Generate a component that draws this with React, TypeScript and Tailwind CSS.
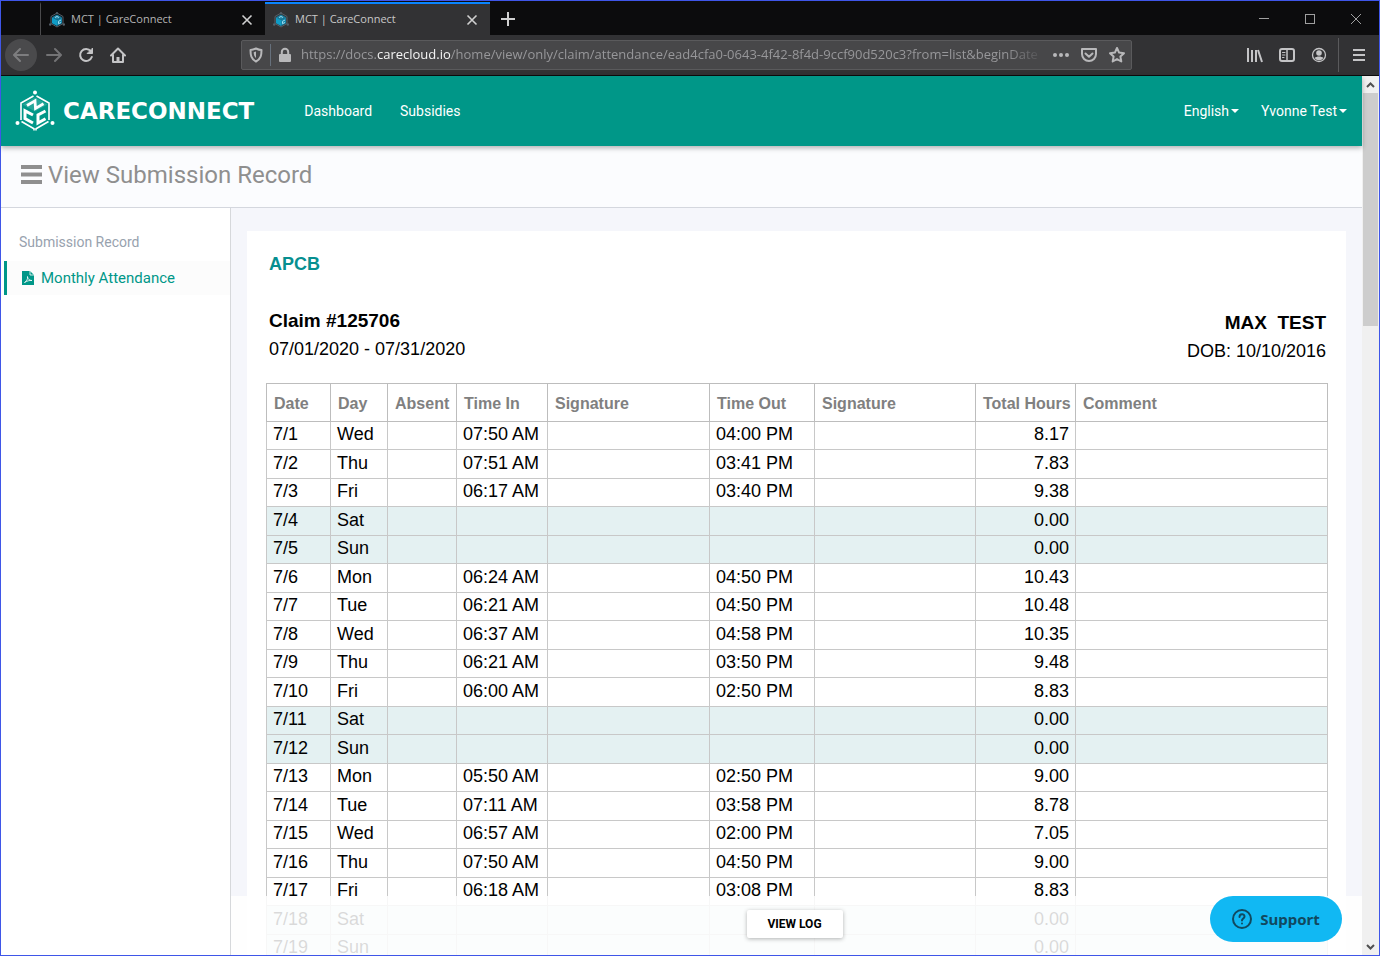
import type { ReactNode } from "react";

type Row = {
  date: string;
  day: string;
  timeIn?: string;
  timeOut?: string;
  hours: string;
};

const rows: Row[] = [
  { date: "7/1", day: "Wed", timeIn: "07:50 AM", timeOut: "04:00 PM", hours: "8.17" },
  { date: "7/2", day: "Thu", timeIn: "07:51 AM", timeOut: "03:41 PM", hours: "7.83" },
  { date: "7/3", day: "Fri", timeIn: "06:17 AM", timeOut: "03:40 PM", hours: "9.38" },
  { date: "7/4", day: "Sat", hours: "0.00" },
  { date: "7/5", day: "Sun", hours: "0.00" },
  { date: "7/6", day: "Mon", timeIn: "06:24 AM", timeOut: "04:50 PM", hours: "10.43" },
  { date: "7/7", day: "Tue", timeIn: "06:21 AM", timeOut: "04:50 PM", hours: "10.48" },
  { date: "7/8", day: "Wed", timeIn: "06:37 AM", timeOut: "04:58 PM", hours: "10.35" },
  { date: "7/9", day: "Thu", timeIn: "06:21 AM", timeOut: "03:50 PM", hours: "9.48" },
  { date: "7/10", day: "Fri", timeIn: "06:00 AM", timeOut: "02:50 PM", hours: "8.83" },
  { date: "7/11", day: "Sat", hours: "0.00" },
  { date: "7/12", day: "Sun", hours: "0.00" },
  { date: "7/13", day: "Mon", timeIn: "05:50 AM", timeOut: "02:50 PM", hours: "9.00" },
  { date: "7/14", day: "Tue", timeIn: "07:11 AM", timeOut: "03:58 PM", hours: "8.78" },
  { date: "7/15", day: "Wed", timeIn: "06:57 AM", timeOut: "02:00 PM", hours: "7.05" },
  { date: "7/16", day: "Thu", timeIn: "07:50 AM", timeOut: "04:50 PM", hours: "9.00" },
  { date: "7/17", day: "Fri", timeIn: "06:18 AM", timeOut: "03:08 PM", hours: "8.83" },
  { date: "7/18", day: "Sat", hours: "0.00" },
  { date: "7/19", day: "Sun", hours: "0.00" },
];

const columns = [
  { label: "Date", width: "w-[64px]" },
  { label: "Day", width: "w-[57px]" },
  { label: "Absent", width: "w-[69px]" },
  { label: "Time In", width: "w-[91px]" },
  { label: "Signature", width: "w-[162px]" },
  { label: "Time Out", width: "w-[105px]" },
  { label: "Signature", width: "w-[161px]" },
  { label: "Total Hours", width: "w-[100px]" },
  { label: "Comment", width: "" },
];

function Icon({ children, className = "" }: { children: ReactNode; className?: string }) {
  return (
    <svg
      viewBox="0 0 16 16"
      className={`size-4 shrink-0 ${className}`}
      fill="none"
      stroke="currentColor"
      strokeWidth="2"
      strokeLinecap="round"
      strokeLinejoin="round"
      aria-hidden="true"
    >
      {children}
    </svg>
  );
}

function ToolButton({ label, children, className = "" }: { label: string; children: ReactNode; className?: string }) {
  return (
    <button aria-label={label} className={`flex size-8 shrink-0 items-center justify-center ${className}`}>
      {children}
    </button>
  );
}

function Favicon() {
  return (
    <svg viewBox="0 0 16 16" className="size-4 shrink-0" aria-hidden="true">
      <path d="M8 1l6 3.5v7L8 15l-6-3.5v-7z" fill="none" stroke="#55606a" />
      <path d="M8 2.500l5 2.700L8 8 3 5.200z" fill="#1b7fa0" />
      <path d="M3 5.200L8 8v6l-5-2.700z" fill="#0f9cc6" />
      <path d="M13 5.200L8 8v6l5-2.700z" fill="#1486ab" />
      <path d="M12 8l-2.500 1.300v2.400l2.500-1.200M6 5.500l2-1 2 1" fill="none" stroke="#9fdcf0" />
      <circle cx="8" cy="1" r="1" fill="#55606a" />
      <circle cx="1.200" cy="12.500" r="1.200" fill="#55606a" />
      <circle cx="14.800" cy="12.500" r="1.200" fill="#55606a" />
    </svg>
  );
}

function BrowserTab({ active = false }: { active?: boolean }) {
  return (
    <div
      className={`flex w-[225px] items-center border-t-2 pr-3 pl-2 text-[11px] ${
        active ? "border-[#0a84ff] bg-[#323234] text-[#c8c8c8]" : "border-transparent border-l border-l-[#4a4a4c] text-[#b4b4b4]"
      }`}
    >
      <Favicon />
      <span className="ml-[6px] flex-1">MCT | CareConnect</span>
      <button aria-label="Close tab" className="text-[#d0d0d0]">
        <svg viewBox="0 0 12 12" className="size-3" stroke="currentColor" strokeWidth="1.600" aria-hidden="true">
          <path d="M1.500 1.500l9 9M10.500 1.500l-9 9" />
        </svg>
      </button>
    </div>
  );
}

function TabStrip() {
  return (
    <div className="flex h-[34px] shrink-0 bg-[#0c0c0d] pt-px pl-[39px]">
      <BrowserTab />
      <BrowserTab active />
      <button aria-label="New tab" className="flex w-9 items-center justify-center text-[#d0d0d0]">
        <svg viewBox="0 0 14 14" className="size-[14px]" stroke="currentColor" strokeWidth="2" aria-hidden="true">
          <path d="M7 0v14M0 7h14" />
        </svg>
      </button>
      <div className="ml-auto flex text-[#a0a0a0]">
        <button aria-label="Minimize" className="flex w-[46px] items-center justify-center">
          <span className="h-px w-[10px] bg-[#a0a0a0]" />
        </button>
        <button aria-label="Maximize" className="flex w-[46px] items-center justify-center">
          <span className="size-[10px] border border-[#a0a0a0]" />
        </button>
        <button aria-label="Close window" className="flex w-[46px] items-center justify-center">
          <svg viewBox="0 0 10 10" className="size-[10px]" stroke="currentColor" aria-hidden="true">
            <path d="M0 0l10 10M10 0L0 10" />
          </svg>
        </button>
      </div>
    </div>
  );
}

function Toolbar() {
  return (
    <div className="flex h-[41px] shrink-0 items-center border-b border-[#0c0c0d] bg-[#323234] pl-1 text-[#c4c4c6]">
      <ToolButton label="Back" className="rounded-full bg-[#4a4a4c] text-[#7d7d7f]">
        <Icon>
          <path d="M15 8H1.500M7 2L1 8l6 6" />
        </Icon>
      </ToolButton>
      <ToolButton label="Forward" className="ml-px text-[#737375]">
        <Icon>
          <path d="M1 8h13.500M9 2l6 6-6 6" />
        </Icon>
      </ToolButton>
      <ToolButton label="Reload">
        <Icon>
          <path d="M12.800 4.200A6 6 0 1 0 13.800 10" />
          <path d="M14.500 1.500v5h-5z" fill="currentColor" strokeWidth="1" />
        </Icon>
      </ToolButton>
      <ToolButton label="Home">
        <Icon>
          <path d="M1 8.500L8 1.500l7 7M3 8v7h10V8" />
          <path d="M8 10v4" strokeWidth="3" strokeLinecap="butt" />
        </Icon>
      </ToolButton>

      <div className="ml-[107px] flex h-[30px] min-w-0 flex-1 items-center rounded-[2px] border border-[#5a5a5c] bg-[#474749] px-[6px]">
        <Icon className="text-[#b8b8ba]">
          <path d="M8 1.500c2 1 3.500 1.500 5.500 1.500 0 5-.5 9-5.500 11.500C3 12 2.500 8 2.500 3c2 0 3.500-.5 5.500-1.500z" />
          <path d="M8 4.500v6.500c-1.800-1.500-2.200-3.500-2.300-5.800z" fill="currentColor" stroke="none" />
        </Icon>
        <span className="mx-[6px] h-[22px] w-px bg-[#66707c]" />
        <Icon className="text-[#b8b8ba]">
          <path d="M4.800 8V5a3.200 3.200 0 0 1 6.400 0v3" />
          <rect x="3" y="8" width="10" height="6" fill="currentColor" />
        </Icon>
        <a
          href="#claim"
          className="ml-2 min-w-0 flex-1 overflow-hidden text-[13px] whitespace-nowrap text-[#97979a] [mask-image:linear-gradient(to_left,transparent,black_40px)]"
        >
          https://docs.<span className="text-[#f4f4f4]">carecloud.io</span>
          /home/view/only/claim/attendance/ead4cfa0-0643-4f42-8f4d-9ccf90d520c3?from=list&amp;beginDate
        </a>
        <div className="ml-2 flex gap-3 text-[#b8b8ba]">
          <button aria-label="Page actions">
            <Icon>
              <g fill="currentColor" stroke="none">
                <circle cx="2" cy="8" r="2" />
                <circle cx="8" cy="8" r="2" />
                <circle cx="14" cy="8" r="2" />
              </g>
            </Icon>
          </button>
          <button aria-label="Save to Pocket">
            <Icon>
              <path d="M1 2h14v5a7 7 0 0 1-14 0z" />
              <path d="M4.500 6.500L8 9.800l3.500-3.300" />
            </Icon>
          </button>
          <button aria-label="Bookmark this page">
            <Icon>
              <path d="M8 1l2.100 4.600 4.900.6-3.600 3.400.9 4.900L8 12.100l-4.300 2.400.9-4.900L1 6.200l4.900-.6z" />
            </Icon>
          </button>
        </div>
      </div>

      <div className="ml-[107px] flex">
        <ToolButton label="Library">
          <Icon>
            <path d="M1 1v14M5 3v12M9 3v12M11 3l4 12" strokeLinecap="butt" />
          </Icon>
        </ToolButton>
        <ToolButton label="Sidebars">
          <Icon>
            <rect x="1" y="2" width="14" height="12" rx="2" />
            <path d="M8 2v12" strokeWidth="1.500" />
            <path d="M3.500 5.500h2.500M3.500 8h2.500M3.500 10.500h1.500" strokeWidth="1" />
          </Icon>
        </ToolButton>
        <ToolButton label="Account">
          <Icon>
            <circle cx="8" cy="8" r="6.500" strokeWidth="1.300" />
            <circle cx="8" cy="6" r="2.800" fill="currentColor" stroke="none" />
            <path d="M3.500 11c1.200-1 2.800-1.500 4.500-1.500s3.300.5 4.500 1.500A5.500 5.500 0 0 1 8 13.300 5.500 5.500 0 0 1 3.500 11z" fill="currentColor" stroke="none" />
          </Icon>
        </ToolButton>
      </div>
      <span className="ml-[3px] h-[34px] w-px bg-[#5a5a5c]" />
      <ToolButton label="Open menu" className="mx-1">
        <Icon>
          <path d="M2 3h12M2 8h12M2 13h12" strokeLinecap="butt" />
        </Icon>
      </ToolButton>
    </div>
  );
}

function LogoMark() {
  return (
    <svg viewBox="0 0 40 42" className="h-[42px] w-[40px]" fill="none" stroke="white" aria-hidden="true">
      <path d="M18.500 6L6 13v17M21.500 6L34 13v17M6.500 31.500L19 38.800v1.700M33.500 31.500L21 38.800v1.700" strokeWidth="1.600" />
      <path d="M20 7.500L7.500 14.500 20 21.500l12.500-7z" fill="white" stroke="none" opacity=".15" />
      <path d="M12 15.500L20 10.800 20.500 18.500 28.500 13.800" strokeWidth="2.800" />
      <path d="M18 25L10 20.800v7.700l8 4.500" strokeWidth="3" />
      <path d="M30.500 21L23 25v8l7.500-4.200" strokeWidth="3" />
      <g fill="white" stroke="none">
        <circle cx="20" cy="2.500" r="2" />
        <circle cx="2.500" cy="33" r="2" />
        <circle cx="37.500" cy="33" r="2" />
      </g>
    </svg>
  );
}

function Caret() {
  return (
    <svg viewBox="0 0 8 4" className="h-1 w-2" fill="currentColor" aria-hidden="true">
      <path d="M0 0h8L4 4z" />
    </svg>
  );
}

function SiteNav() {
  return (
    <nav className="relative z-10 flex h-[70px] shrink-0 items-center bg-[#009788] pr-[15px] pl-[14px] text-[14px] text-white shadow-[0_2px_5px_rgba(0,0,0,0.3)]">
      <a href="#home" className="flex items-center gap-2">
        <LogoMark />
        <span className="font-['DejaVu_Sans'] text-[23px] font-bold">CARECONNECT</span>
      </a>
      <a href="#dashboard" className="ml-[50px]">Dashboard</a>
      <a href="#subsidies" className="ml-7">Subsidies</a>
      <button className="ml-auto flex items-center gap-[2px]">
        English
        <Caret />
      </button>
      <button className="ml-[22px] flex items-center gap-[2px]">
        Yvonne Test
        <Caret />
      </button>
    </nav>
  );
}

function Sidebar() {
  return (
    <aside className="w-[230px] shrink-0 border-r border-[#d6d8db] bg-white pt-[23px] pl-[3px]">
      <h2 className="pl-[15px] text-[14px] leading-[22px] text-[#98a2ae]">Submission Record</h2>
      <a
        href="#attendance"
        className="mt-2 flex h-[34px] items-center border-l-[3px] border-[#009788] bg-[#fcfcfc] pl-[15px] text-[15px] text-[#009788]"
      >
        <svg viewBox="0 0 12 14" className="h-[14px] w-3" aria-hidden="true">
          <path d="M0 0h8l4 4v10H0z" fill="#009788" />
          <path d="M8 0v4h4" fill="none" stroke="white" strokeWidth=".8" />
          <path d="M2.500 11.500C4.500 10.500 6 8 5.500 5.500c0 2.500 2 4 4.500 4-2.500-.3-5 .5-7.500 2z" fill="none" stroke="white" strokeWidth=".8" />
        </svg>
        <span className="ml-[7px]">Monthly Attendance</span>
      </a>
    </aside>
  );
}

function AttendanceTable() {
  return (
    <table className="mt-[18px] w-full table-fixed border-collapse text-left">
      <thead>
        <tr className="h-[38px] text-[16px] text-[#808080]">
          {columns.map((c, i) => (
            <th key={i} className={`border border-[#bdbdbd] pt-[2px] pl-[7px] font-bold whitespace-nowrap ${c.width}`}>
              {c.label}
            </th>
          ))}
        </tr>
      </thead>
      <tbody className="text-[18px] leading-6 [&_td]:border [&_td]:border-[#c8c8c8] [&_td]:px-[6px] [&_td]:pb-[3px] [&_td]:whitespace-nowrap">
        {rows.map((r) => (
          <tr
            key={r.date}
            className={`h-[28px] even:h-[29px] ${r.day === "Sat" || r.day === "Sun" ? "bg-[#e4f1f2]" : "bg-white"}`}
          >
            <td>{r.date}</td>
            <td>{r.day}</td>
            <td />
            <td>{r.timeIn}</td>
            <td />
            <td>{r.timeOut}</td>
            <td />
            <td className="text-right">{r.hours}</td>
            <td />
          </tr>
        ))}
      </tbody>
    </table>
  );
}

function Scrollbar() {
  return (
    <div className="flex w-[17px] shrink-0 flex-col items-center bg-[#f0f0f0] text-[#505050]">
      <svg viewBox="0 0 17 17" className="size-[17px] shrink-0" fill="none" stroke="currentColor" strokeWidth="2" aria-hidden="true">
        <path d="M5 11l3.500-3.500L12 11" />
      </svg>
      <div className="h-[233px] w-[15px] bg-[#cdcdcd]" />
      <svg viewBox="0 0 17 17" className="mt-auto size-[17px] shrink-0" fill="none" stroke="currentColor" strokeWidth="2" aria-hidden="true">
        <path d="M5 7l3.500 3.500L12 7" />
      </svg>
    </div>
  );
}

export default function App() {
  return (
    <div className="flex h-screen flex-col overflow-hidden border border-[#3f56e8] font-['Open_Sans',sans-serif]">
      <TabStrip />
      <Toolbar />

      <div className="flex min-h-0 flex-1">
        <div className="flex min-w-0 flex-1 flex-col font-[Roboto,sans-serif]">
          <SiteNav />

          {/* Page title */}
          <header className="flex h-[62px] shrink-0 items-center border-b border-[#d4d7de] bg-[#fbfcfe] pb-1 pl-5 text-[24px] text-[#8f8f8f]">
            <button aria-label="Toggle menu" className="mr-[6px]">
              <svg viewBox="0 0 21 19" className="h-[19px] w-[21px]" fill="currentColor" aria-hidden="true">
                <path d="M0 0h21v4H0zM0 7.500h21v4H0zM0 15h21v4H0z" />
              </svg>
            </button>
            <h1>View Submission Record</h1>
          </header>

          <div className="flex min-h-0 flex-1">
            <Sidebar />

            <div className="relative min-w-0 flex-1 overflow-hidden bg-[#f5f6fb]">
              <main className="mx-4 mt-[23px] bg-white pt-[21px] pr-[18px] pl-[19px] font-['Liberation_Sans',Arial,sans-serif] text-black">
                <h2 className="pl-[3px] text-[18px] leading-6 font-bold text-[#068f90]">APCB</h2>
                <div className="mt-[31px] flex justify-between pr-[2px] pl-[3px] text-[18px] leading-7">
                  <div>
                    <h3 className="text-[19px] font-bold">Claim #125706</h3>
                    <p>07/01/2020 - 07/31/2020</p>
                  </div>
                  <div className="pt-[2px] text-right">
                    <h3 className="text-[19px] font-bold whitespace-pre">MAX  TEST</h3>
                    <p>DOB: 10/10/2016</p>
                  </div>
                </div>
                <AttendanceTable />
              </main>

              {/* Action bar */}
              <div className="absolute inset-x-0 bottom-0 flex h-[59px] justify-center bg-white/85 pt-[14px] pr-1">
                <button className="h-7 w-24 rounded-[2px] bg-white text-[12px] font-bold text-black shadow-[0_1px_4px_rgba(0,0,0,0.3)]">
                  VIEW LOG
                </button>
              </div>
              <button className="absolute right-5 bottom-[13px] flex h-[46px] w-[132px] items-center justify-center gap-2 rounded-full bg-[#11b8f3] font-['Noto_Sans',sans-serif] text-[15px] font-bold text-[#11495f]">
                <svg viewBox="0 0 20 20" className="size-5" fill="none" stroke="currentColor" strokeWidth="2" strokeLinecap="round" aria-hidden="true">
                  <circle cx="10" cy="10" r="9" />
                  <path d="M7.500 8c0-3.500 5-3.500 5-.5 0 2-2.500 2-2.500 4" />
                  <path d="M10 14.500v.1" />
                </svg>
                Support
              </button>
            </div>
          </div>
        </div>
        <Scrollbar />
      </div>
    </div>
  );
}
